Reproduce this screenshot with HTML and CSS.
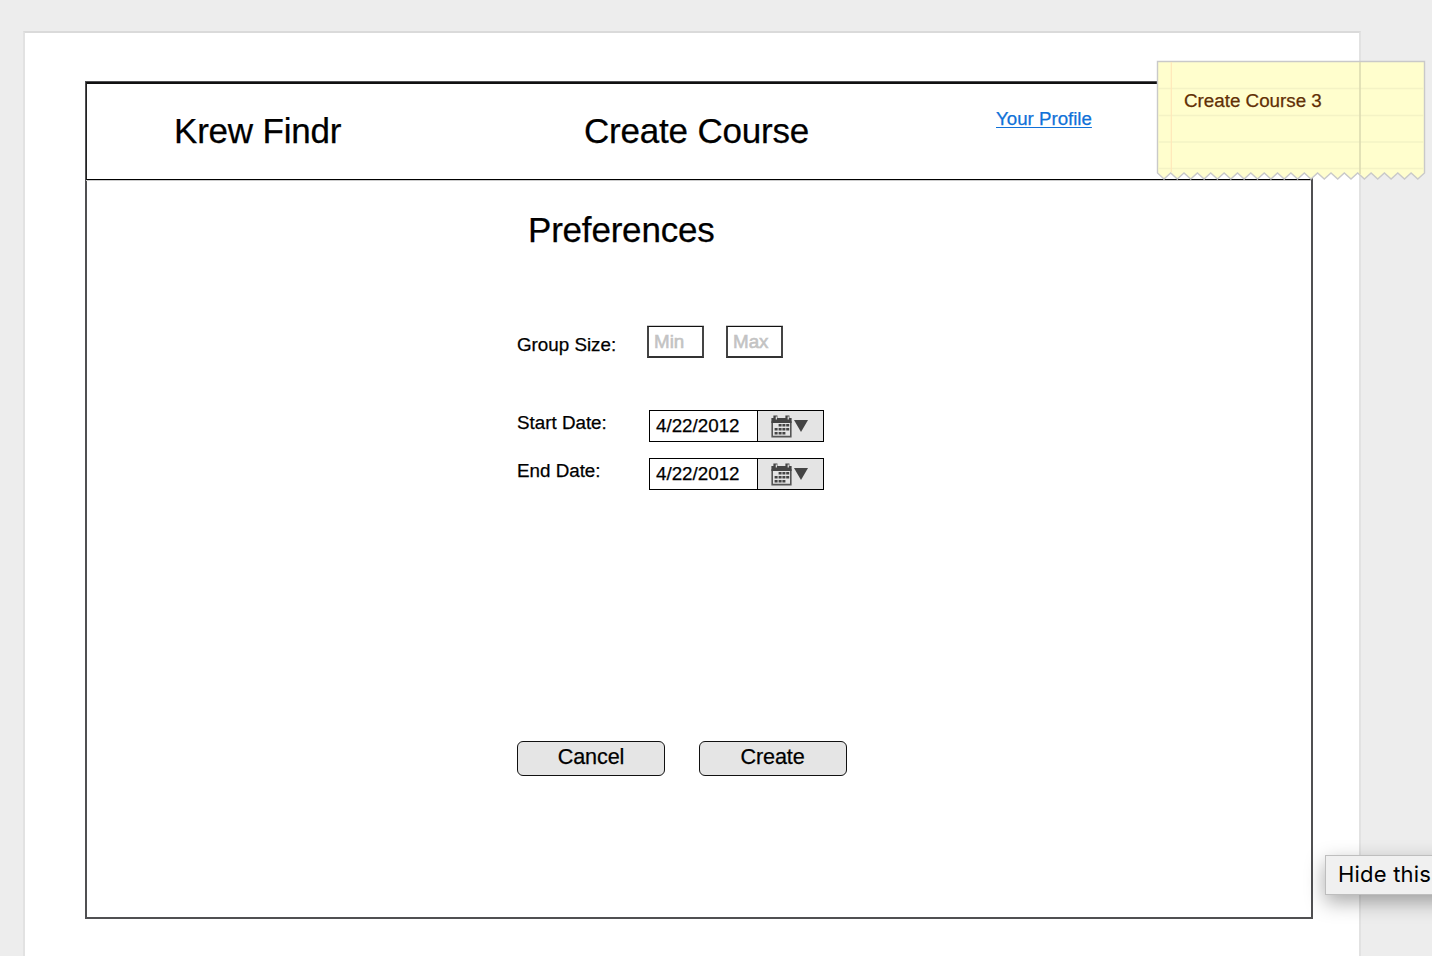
FILE: index.html
```html
<!DOCTYPE html>
<html lang="en">
<head>
<meta charset="utf-8">
<title>Krew Findr</title>
<link rel="stylesheet" href="styles.css">
</head>
<body>
<svg class="symbols" width="0" height="0">
  <symbol id="calendar" viewBox="0 0 21 23">
    <path fill="#e4e4e4" stroke="#555" stroke-width="1.6" d="M1.2 7h18.6v14.6H1.2z"/>
    <path fill="#444" d="M.4 3h2V.5h4V3h8V.5h4V3h2.2v5H.4z"/>
    <path fill="#d8d8d8" d="M4.7 1.4h1.3v3H4.7zM16.6 1.4h1.3v3h-1.3z"/>
    <path fill="#444" d="M7.6 9h3v2.6h-3zM11.4 9h3v2.6h-3zM15.2 9h3v2.6h-3zM3.6 13h3v2.6h-3zM7.6 13h3v2.6h-3zM11.4 13h3v2.6h-3zM15.2 13h3v2.6h-3zM3.6 17h3v2.6h-3zM7.6 17h3v2.6h-3zM11.4 17h3v2.6h-3z"/>
  </symbol>
</svg>
<main class="page">
  <section class="frame">
    <header class="header">
      <h1 class="brand">Krew Findr</h1>
      <h1 class="title">Create Course</h1>
      <a class="profile" href="#">Your Profile</a>
    </header>
    <h2 class="subtitle">Preferences</h2>
    <form class="form">
      <div class="row sizes">
        <span class="label">Group Size:</span>
        <span class="box">Min</span>
        <span class="box">Max</span>
      </div>
      <div class="row date-row">
        <span class="label">Start Date:</span>
        <div class="date"><span class="value">4/22/2012</span><span class="picker"><svg width="21" height="23"><use href="#calendar"/></svg><i class="arrow"></i></span></div>
      </div>
      <div class="row date-row">
        <span class="label">End Date:</span>
        <div class="date"><span class="value">4/22/2012</span><span class="picker"><svg width="21" height="23"><use href="#calendar"/></svg><i class="arrow"></i></span></div>
      </div>
      <div class="actions">
        <button type="button">Cancel</button>
        <button type="button">Create</button>
      </div>
    </form>
  </section>
</main>
<aside class="note">
  <svg class="paper" width="270" height="122" viewBox="0 0 270 122">
    <path class="sheet" d="M1.5 1.5H268.5V113L261.8 119L255.1 113L248.5 119L241.8 113L235.1 119L228.4 113L221.7 119L215.1 113L208.4 119L201.7 113L195 119L188.3 113L181.7 119L175 113L168.3 119L161.6 113L154.9 119L148.3 113L141.6 119L134.9 113L128.2 119L121.5 113L114.9 119L108.2 113L101.5 119L94.8 113L88.1 119L81.5 113L74.8 119L68.1 113L61.4 119L54.7 113L48.1 119L41.4 113L34.7 119L28 113L21.3 119L14.7 113L8 119L1.5 113Z"/>
    <path class="rule" d="M2 28.5H268M2 55.5H268M2 82H268M2 108.5H268"/>
    <path class="margin" d="M15.3 2V112"/>
    <path class="edge" d="M204 2V114"/>
  </svg>
  <span class="note-text">Create Course 3</span>
</aside>
<div class="tooltip">Hide this</div>
</body>
</html>
```
FILE: styles.css
```css
* { box-sizing: border-box; }
html, body { height: 100%; }
body {
  margin: 0;
  padding: 31px 0 0 23px;
  overflow: hidden;
  position: relative;
  background: #ededed;
  color: #000;
  font: 18.8px/24px "Liberation Sans", Arial, sans-serif;
  -webkit-text-stroke: .25px currentColor;
}
.symbols { display: block; position: absolute; }
.page {
  width: 1338px;
  height: 940px;
  padding: 48px 0 0 60px;
  background: #fff;
  border: 2px solid #e2e2e2;
  border-top-color: #dadada;
}
.frame {
  width: 1228px;
  height: 838px;
  border: 2px solid #505052;
}
.header {
  display: flex;
  height: 98px;
  margin: -1px 0 0 -1px;
  padding-left: 87px;
  border-top: 2px solid #111;
  border-left: 1px solid #222;
  border-bottom: 1px solid #000;
  box-shadow: 0 1px #ccc;
}
h1, h2 { margin: 0; font-weight: 400; font-size: 35px; line-height: 40px; letter-spacing: -.2px; white-space: nowrap; }
.header h1 { margin-top: 27px; }
.brand { width: 410px; letter-spacing: -.2px; }
.title { width: 412px; }
.profile { margin-top: 23px; font-size: 18.7px; color: #1071d8; text-decoration-color: #1071d8; text-decoration-thickness: 1px; text-underline-offset: 2px; white-space: nowrap; }
.subtitle { margin: 30px 0 0 441px; }
.form { margin: 76px 0 0 430px; }
.row { display: flex; }
.label { width: 130px; white-space: nowrap; }
.sizes { height: 84px; }
.sizes .label { padding-top: 7px; }
.box {
  width: 57px;
  height: 32px;
  margin-right: 22px;
  padding: 3px 0 0 5px;
  border: 2px solid #222;
  border-width: 1px 2px 2px;
  border-color: #111 #444 #333;
  box-shadow: 0 -1px #ccc;
  color: #c3c3c3;
  -webkit-text-stroke: .6px #c3c3c3;
}
.date-row { height: 48px; }
.date-row .label { width: 132px; padding-top: 1px; }
.date {
  display: flex;
  width: 175px;
  height: 32px;
  border: 1.5px solid #000;
}
.value { width: 107px; padding: 3px 0 0 6px; }
.picker {
  display: flex;
  flex: 1;
  padding: 4px 0 0 13px;
  gap: 2px;
  background: #e4e4e4;
  border-left: 1.5px solid #000;
}
.arrow {
  width: 14px;
  height: 12px;
  margin-top: 5px;
  background: #444;
  clip-path: polygon(0 0, 100% 0, 50% 100%);
}
.actions { display: flex; gap: 33.5px; margin-top: 235px; }
button {
  width: 148px;
  height: 35px;
  padding: 0 0 3px;
  border: 1.5px solid #111;
  border-radius: 6px;
  background: #e5e5e5;
  color: #000;
  font: 21.6px/28px "Liberation Sans", Arial, sans-serif;
  letter-spacing: -.1px;
  -webkit-text-stroke: .25px #000;
}
.note { position: absolute; left: 1156px; top: 60px; width: 270px; height: 122px; }
.paper { position: absolute; inset: 0; }
.sheet { fill: #fffecd; stroke: #c9c9c9; stroke-width: 1.4; }
.rule { fill: none; stroke: #f4f3c5; stroke-width: 1.4; }
.margin { fill: none; stroke: #ffe7b9; stroke-width: 1.2; }
.edge { fill: none; stroke: #dcdbb1; stroke-width: 1.6; }
.note-text { position: absolute; left: 28px; top: 29px; color: #612f05; white-space: nowrap; }
.tooltip {
  position: absolute;
  left: 1325px;
  top: 855px;
  width: 140px;
  height: 40px;
  padding: 5px 0 0 12px;
  background: #f0f0f0;
  border: 1px solid #bebebe;
  box-shadow: 0 7px 20px rgba(0, 0, 0, .34);
  font: 22px/27px Inter, sans-serif;
  letter-spacing: .2px;
  white-space: nowrap;
  -webkit-text-stroke: 0;
}
```
